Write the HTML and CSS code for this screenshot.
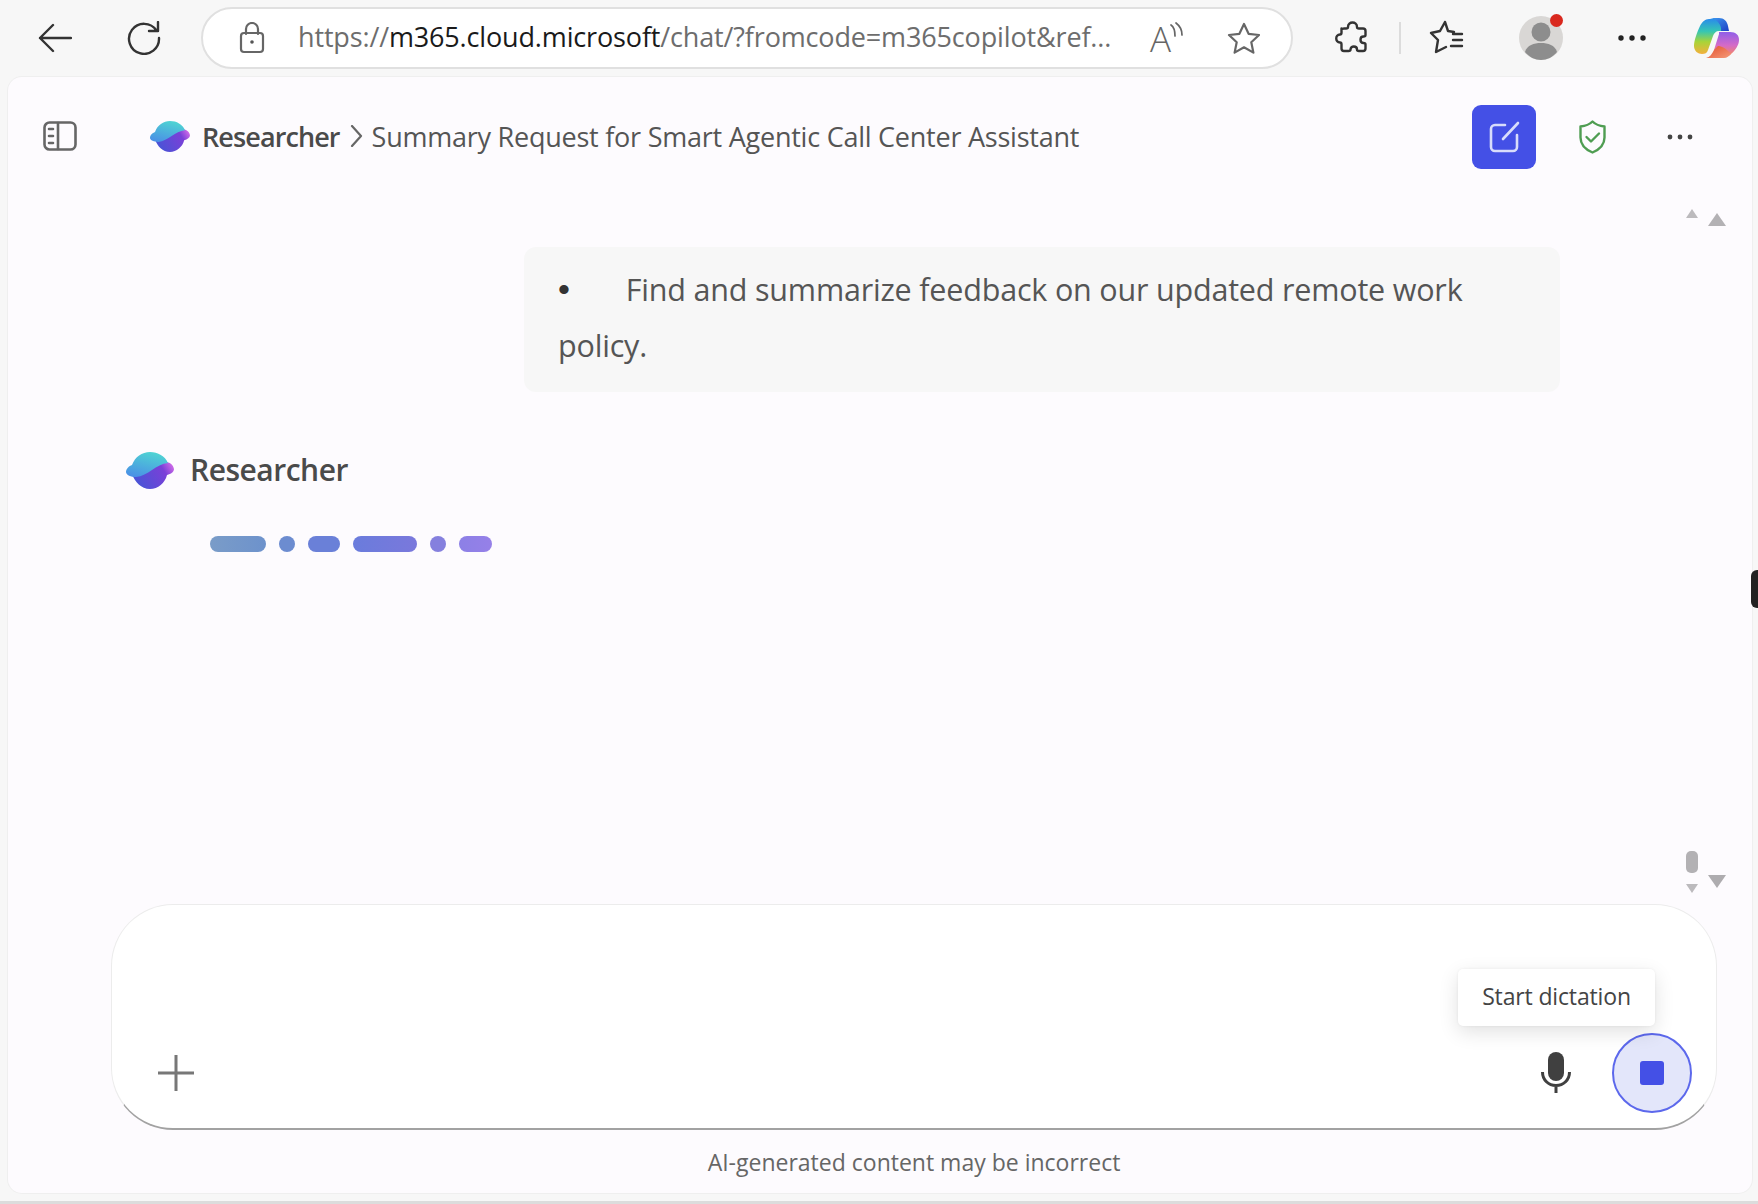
FILE: index.html
```html
<!DOCTYPE html>
<html lang="en">
<head>
<meta charset="utf-8">
<title>Researcher</title>
<link rel="stylesheet" href="styles.css">
</head>
<body>
<header class="toolbar">
  <svg class="tb-back" width="34" height="30" viewBox="0 0 34 30"><path d="M33 15H2M15 2 2 15l13 13" class="ink"/></svg>
  <svg class="tb-reload" width="34" height="34" viewBox="0 0 34 34"><path d="M29.5 9.5A15 15 0 1 0 32 17M31 1v9h-9" class="ink"/></svg>
  <div class="address">
    <svg class="lock" width="26" height="32" viewBox="0 0 26 32"><path d="M7 12V7a6 6 0 0 1 12 0v5" class="soft"/><rect x="2" y="11" width="22" height="19" rx="3" class="soft"/><circle cx="13" cy="20" r="1.8" fill="#555"/></svg>
    <div class="url">https://<b>m365.cloud.microsoft</b>/chat/?fromcode=m365copilot&amp;ref...</div>
    <div class="aloud"><span class="aloud-a">A</span><svg class="aloud-waves" width="14" height="16" viewBox="0 0 14 16"><path d="M2 3c3 2 4 6 4 11M7 1c4 3 6 7 6 12" class="soft thin"/></svg></div>
    <svg class="star" width="34" height="32" viewBox="0 0 34 32"><path d="m17 2 4.600 9.800 10.400 1.200-7.700 7.200 2.100 10.400-9.400-5.300-9.400 5.300 2.100-10.400L2 13l10.400-1.200z" class="soft"/></svg>
  </div>
  <svg class="tb-puzzle" width="34" height="34" viewBox="0 0 34 34"><path d="M13 6c0-6 9-6 9 0 0 1 1 1.500 2 1.500h4c1.500 0 2.500 1 2.500 2.500v4c0 1-1 1.500-2 1.500-4 0-4 6.500 0 6.500 1 0 2 .5 2 1.500v4c0 1.500-1 2.500-2.500 2.500h-4c-1 0-2-.5-2-1.500 0-4-6.500-4-6.500 0 0 1-1 1.500-2 1.500H9c-1.500 0-2.500-1-2.500-2.500v-4c0-1-.5-2-1.500-2-5 0-5-8 0-8 1 0 1.500-1 1.500-2v-4C6.500 8.500 7.500 7.500 9 7.500h2c1 0 2-.5 2-1.500z" class="ink"/></svg>
  <span class="tb-divider"></span>
  <svg class="tb-favs" width="36" height="36" viewBox="0 0 36 36"><path d="M25 12 19 11 16 2 11 11 2 13l7 7-2 12 10-5" class="ink"/><path d="M24 14h9M24 20h9M22 26h11" class="ink"/></svg>
  <div class="avatar">
    <svg width="46" height="46" viewBox="0 0 46 46"><circle cx="23" cy="23" r="22" fill="#d9d7d5"/><circle cx="23" cy="17" r="9.500" fill="#8d8d8d"/><path d="M7 37c2-7 9-9 16-9s14 2 16 9c-4 5-10 8-16 8S11 42 7 37z" fill="#8d8d8d"/></svg>
    <span class="dot-red"></span>
  </div>
  <svg class="tb-more" width="28" height="6" viewBox="0 0 28 6"><circle cx="3" cy="3" r="2.700"/><circle cx="14" cy="3" r="2.700"/><circle cx="25" cy="3" r="2.700"/></svg>
  <svg class="tb-copilot" width="45" height="40" viewBox="0 0 45 40">
    <defs>
      <linearGradient id="cpL" x1="0" y1="0" x2="0" y2="1"><stop offset="0" stop-color="#2a8cea"/><stop offset=".35" stop-color="#35c6b4"/><stop offset=".65" stop-color="#a8d438"/><stop offset="1" stop-color="#f4b03c"/></linearGradient>
      <linearGradient id="cpT" x1="0" y1="0" x2="1" y2="1"><stop offset="0" stop-color="#3f9cf0"/><stop offset="1" stop-color="#1c3fc4"/></linearGradient>
      <linearGradient id="cpR" x1="0" y1="0" x2="0" y2="1"><stop offset="0" stop-color="#8f5fe8"/><stop offset=".55" stop-color="#d46ac8"/><stop offset="1" stop-color="#f78a5a"/></linearGradient>
      <linearGradient id="cpB" x1="0" y1="0" x2="1" y2="1"><stop offset="0" stop-color="#e2502c"/><stop offset="1" stop-color="#f59a7a"/></linearGradient>
    </defs>
    <path d="M15 1c-4 0-7 3-9 7-3 6-6 15-6 20 0 5 4 8 8 8 3 0 5-1 6-4l5-14c1-3 3-5 6-5h9l-2-7c-1-4-4-5-8-5z" fill="url(#cpL)"/>
    <path d="M16 0h9c5 0 8 3 9 8l1 5h-8c1-5-3-12-11-13z" fill="url(#cpT)"/>
    <path d="M25 14h11c6 0 9 3 9 8 0 5-4 11-8 14-2 2-4 2-5 2l-12-6 5-16z" fill="url(#cpR)"/>
    <path d="M12 40h18c3 0 5-2 7-4-5-6-10-8-13-8l-4 4c-2 4-4 7-8 8z" fill="url(#cpB)"/>
  </svg>
</header>

<main class="panel">
  <div class="topbar">
    <svg class="side" width="34" height="30" viewBox="0 0 34 30"><rect x="1.500" y="1.500" width="31" height="27" rx="5" class="soft two"/><path d="M15 2v26" class="soft two"/><path d="M6 8h4M6 15h4M6 22h4" class="soft two"/></svg>
    <svg class="logo-sm" width="40" height="31" viewBox="0 0 48 37"><use href="#resLogo"/></svg>
    <div class="crumbs"><span class="crumb-agent">Researcher</span><svg class="crumb-sep" width="13" height="22" viewBox="0 0 13 22"><path d="m2 1 9 10-9 10" class="soft"/></svg><span class="crumb-title">Summary Request for Smart Agentic Call Center Assistant</span></div>
    <button class="newchat"><svg width="32" height="32" viewBox="0 0 32 32"><path d="M17 4H7a4 4 0 0 0-4 4v18a4 4 0 0 0 4 4h18a4 4 0 0 0 4-4V14" class="white"/><path d="M15 18 30 2" class="white"/></svg></button>
    <svg class="shield" width="29" height="34" viewBox="0 0 29 34"><path d="M14.500 1.500c3 3 7 4.500 12 5v11c0 7-5 12-12 15-7-3-12-8-12-15v-11c5-.5 9-2 12-5z" class="green"/><path d="m8.500 17 4.500 4.500 8-8" class="green"/></svg>
    <svg class="dots" width="26" height="6" viewBox="0 0 26 6"><circle cx="3" cy="3" r="2.400"/><circle cx="13" cy="3" r="2.400"/><circle cx="23" cy="3" r="2.400"/></svg>
  </div>

  <section class="thread">
    <div class="bubble"><span class="bullet">•</span><span class="gap"></span><span>Find and summarize feedback on our updated remote work</span> <span>policy.</span></div>
    <div class="agent">
      <svg class="logo-lg" width="48" height="37" viewBox="0 0 48 37">
        <defs>
          <linearGradient id="lgTop" x1=".6" y1="0" x2=".2" y2="1"><stop offset="0" stop-color="#4fd3d3"/><stop offset="1" stop-color="#4a8fe6"/></linearGradient>
          <linearGradient id="lgBot" x1="0" y1=".6" x2="1" y2=".2"><stop offset="0" stop-color="#4754d6"/><stop offset=".75" stop-color="#7a40d8"/><stop offset="1" stop-color="#d06be8"/></linearGradient>
          <g id="resLogo">
            <path d="M6 22c10 2 20-10 30-12 5-1 11 1 12 7 0 3-3 5-7 6-2 8-9 14-17 14-9 0-15-7-18-15z" fill="url(#lgBot)"/>
            <path d="M24 0c8 0 15 4 18 11-12 1-20 13-32 14-5 0-10-2-10-5 0-3 3-6 6-7 3-8 10-13 18-13z" fill="url(#lgTop)"/>
          </g>
        </defs>
        <use href="#resLogo"/>
      </svg>
      <span class="agent-name">Researcher</span>
    </div>
    <div class="loader">
      <span class="pill p1"></span><span class="pill p2"></span><span class="pill p3"></span><span class="pill p4"></span><span class="pill p5"></span><span class="pill p6"></span>
    </div>
    <div class="scroll-a"><span class="tri up sm"></span></div>
    <div class="scroll-b"><span class="tri up lg"></span></div>
    <div class="scroll-c"><span class="thumb"></span><span class="tri down sm"></span></div>
    <div class="scroll-d"><span class="tri down lg"></span></div>
  </section>

  <div class="composer">
    <svg class="plus" width="36" height="36" viewBox="0 0 36 36"><path d="M18 0v36M0 18h36" class="plus-line"/></svg>
    <svg class="mic" width="30" height="41" viewBox="0 0 30 41"><rect x="7" y="0" width="16" height="29" rx="8" fill="#404040"/><path d="M1.500 20c0 8 6 13.500 13.500 13.500S28.500 28 28.500 20M15 33v8" fill="none" stroke="#404040" stroke-width="3"/></svg>
    <button class="stop"><span class="stop-sq"></span></button>
    <div class="tip"><span class="tip-text">Start dictation</span></div>
  </div>
  <p class="disclaimer">AI-generated content may be incorrect</p>
  <span class="edge-tab"></span>
</main>
<div class="rule"></div>
</body>
</html>
```
FILE: styles.css
```css
* { box-sizing: border-box; }
html, body { margin: 0; height: 1204px; overflow: hidden; }
body { background: #f7f7f7; font-family: "Open Sans", "Noto Sans", sans-serif; color: #555; display: flex; flex-direction: column; }

.ink, .soft, .white, .green, .plus-line { fill: none; stroke-linecap: round; stroke-linejoin: round; }
.ink { stroke: #333; stroke-width: 2.400; }
.soft { stroke: #666; stroke-width: 2.200; }
.soft.thin { stroke-width: 1.700; }
.soft.two { stroke-width: 2.600; }
.white { stroke: #d8dcfb; stroke-width: 2.600; }
.green { stroke: #4f9d52; stroke-width: 2.400; }
.plus-line { stroke: #777; stroke-width: 3; }

.toolbar { height: 76px; flex: none; display: flex; align-items: center; padding-left: 38px; }
.tb-back { flex: none; }
.tb-reload { flex: none; margin-left: 55px; }
.address { flex: none; margin-left: 40px; width: 1092px; height: 62px; background: #fff; border: 2px solid #e0e0e0; border-radius: 31px; display: flex; align-items: center; padding-left: 36px; }
.lock { flex: none; }
.url { flex: none; width: 850px; height: 36px; line-height: 34px; margin-left: 33px; font-size: 27px; color: #6d6d6d; white-space: nowrap; letter-spacing: -.15px; }
.url b { font-weight: 400; color: #1a1a1a; }
.aloud { flex: none; position: relative; width: 34px; height: 34px; margin-left: 2px; }
.aloud-a { display: block; font-size: 35px; font-weight: 300; line-height: 36px; color: #666; }
.aloud-waves { position: absolute; left: 19px; top: 1px; }
.star { flex: none; margin-left: 43px; }
.tb-puzzle { flex: none; margin-left: 42px; }
.tb-divider { flex: none; width: 2px; height: 32px; background: #dcdcdc; margin-left: 30px; }
.tb-favs { flex: none; margin-left: 28px; }
.avatar { flex: none; position: relative; width: 46px; height: 46px; margin-left: 53px; }
.avatar svg { display: block; }
.dot-red { position: absolute; left: 32px; top: -1px; width: 13px; height: 13px; border-radius: 50%; background: #d9281e; }
.tb-more { flex: none; margin-left: 54px; fill: #222; }
.tb-copilot { flex: none; margin-left: 48px; }

.panel { position: relative; flex: none; height: 1116px; margin: 1px 6px 0 8px; padding-bottom: 15px; background: #fdfbfe; border-radius: 14px; box-shadow: 0 0 0 1px #efefef; display: flex; flex-direction: column; }
.topbar { height: 90px; flex: none; margin-top: 1px; padding-top: 27px; display: flex; align-items: flex-start; padding-left: 35px; }
.side { flex: none; margin-top: 16px; }
.logo-sm { flex: none; margin-left: 73px; margin-top: 16px; }
.crumbs { flex: none; width: 1250px; margin-left: 12px; display: flex; align-items: center; height: 34px; margin-top: 14px; font-size: 27px; white-space: nowrap; }
.crumb-agent { font-weight: 600; color: #4a4a4a; letter-spacing: -.9px; }
.crumb-sep { flex: none; margin: 0 9px 0 10px; }
.crumb-title { color: #555; letter-spacing: -.24px; }
.newchat { flex: none; width: 64px; height: 64px; margin-left: 20px; border: 0; border-radius: 9px; background: #4450e6; display: flex; align-items: center; justify-content: center; padding: 0; }
.shield { flex: none; margin-left: 42px; margin-top: 15px; }
.dots { flex: none; margin-left: 60px; margin-top: 29px; fill: #444; }

.thread { position: relative; flex: 1; min-height: 0; }
.bubble { position: absolute; left: 516px; top: 79px; width: 1036px; height: 145px; padding: 14px 34px; background: #f7f7f7; border-radius: 12px; font-size: 30.500px; line-height: 56px; color: #555; letter-spacing: -.19px; }
.bullet { color: #333; font-family: "Liberation Sans", sans-serif; font-size: 34px; }
.gap { display: inline-block; width: 56px; }
.agent { position: absolute; left: 118px; top: 281px; display: flex; align-items: center; gap: 16px; }
.logo-lg { flex: none; margin-top: 2px; }
.agent-name { font-size: 30px; font-weight: 600; color: #4a4a4a; letter-spacing: -.5px; }
.loader { position: absolute; left: 202px; top: 368px; display: flex; gap: 13px; }
.pill { height: 16px; border-radius: 8px; display: block; }
.p1 { width: 56px; background: linear-gradient(90deg, #7a9cc8, #6d92cc); }
.p2 { width: 16px; background: #6c8cd0; }
.p3 { width: 32px; background: #6a80d8; }
.p4 { width: 64px; background: linear-gradient(90deg, #6a7cdc, #7a78dc); }
.p5 { width: 16px; background: #8580de; }
.p6 { width: 33px; background: linear-gradient(90deg, #8c80e6, #9680e8); }

.scroll-a { position: absolute; left: 1678px; top: 41px; }
.scroll-b { position: absolute; left: 1700px; top: 45px; }
.scroll-c { position: absolute; left: 1678px; top: 683px; display: flex; flex-direction: column; gap: 11px; align-items: center; }
.scroll-d { position: absolute; left: 1700px; top: 707px; }
.thumb { width: 12px; height: 22px; border-radius: 5px; background: #b3b1b4; display: block; }
.tri { display: block; width: 0; height: 0; border-style: solid; border-color: transparent; }
.tri.up.sm { border-width: 0 6px 9px; border-bottom-color: #bcbabd; }
.tri.up.lg { border-width: 0 9px 13px; border-bottom-color: #b3b1b4; }
.tri.down.sm { border-width: 9px 6px 0; border-top-color: #bcbabd; }
.tri.down.lg { border-width: 13px 9px 0; border-top-color: #aeacaf; }

.composer { position: relative; flex: none; margin-left: 103px; width: 1606px; height: 226px; background: #fff; border-radius: 62px; border: 1px solid #ececec; border-bottom: 2px solid #a2a2a2; }
.plus { position: absolute; left: 46px; top: 150px; }
.mic { position: absolute; left: 1429px; top: 147px; }
.stop { position: absolute; left: 1500px; top: 128px; width: 80px; height: 80px; border-radius: 50%; border: 2px solid #5c68ec; background: #e3e6fa; padding: 0; display: flex; align-items: center; justify-content: center; }
.stop-sq { display: block; width: 24px; height: 24px; border-radius: 3px; background: #4450e6; }
.tip { position: absolute; left: 1346px; top: 64px; width: 197px; height: 57px; background: #fff; border-radius: 5px; box-shadow: 0 6px 20px rgba(0,0,0,.12), 0 0 3px rgba(0,0,0,.06); display: flex; justify-content: center; padding-top: 11px; font-size: 23px; line-height: 32px; color: #444; letter-spacing: -.15px; }
.disclaimer { flex: none; margin: 16px 0 0 103px; width: 1606px; text-align: center; font-size: 23px; line-height: 32px; color: #666; }
.edge-tab { position: absolute; right: -6px; top: 493px; width: 7px; height: 38px; background: #222; border-radius: 6px 0 0 6px; }
.rule { flex: none; height: 3px; margin-top: 8px; background: #dcdcdc; }
```
